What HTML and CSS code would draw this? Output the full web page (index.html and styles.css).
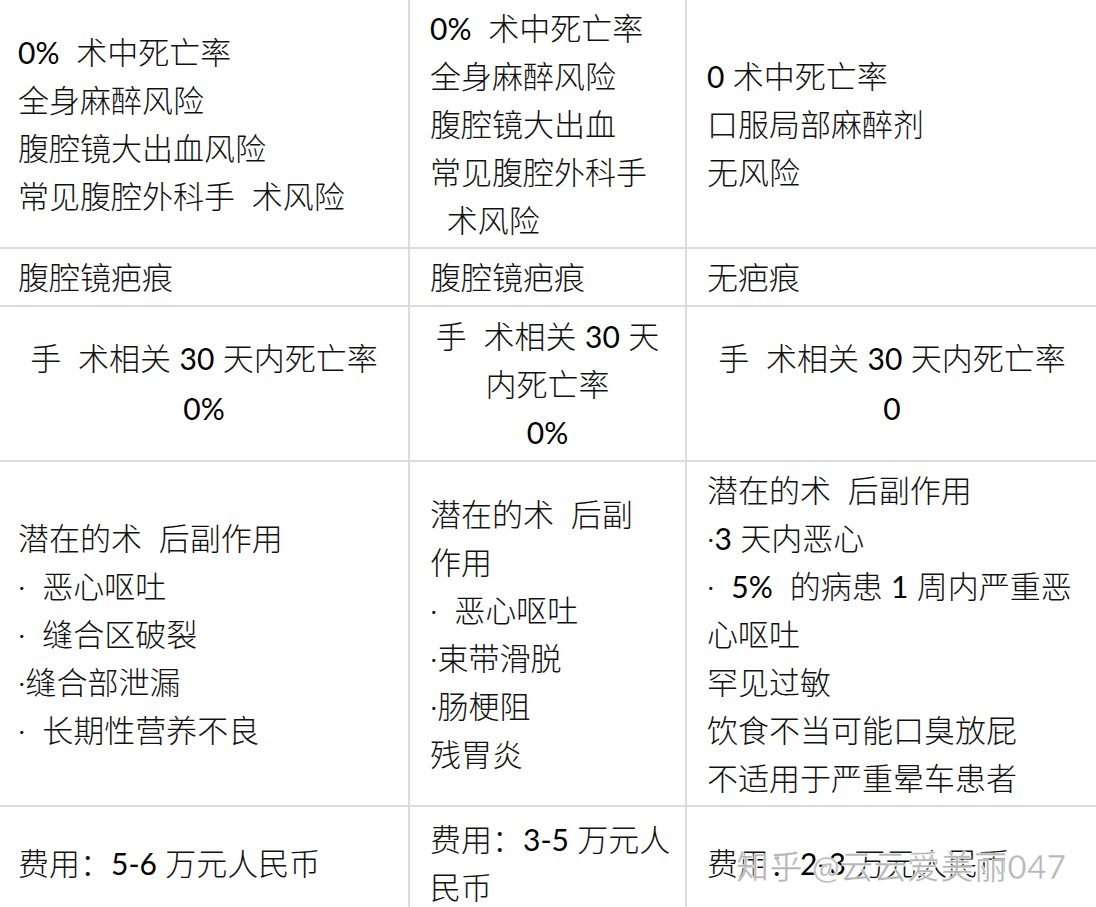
FILE: index.html
```html
<!DOCTYPE html>
<html lang="zh-CN">
<head>
<meta charset="utf-8">
<title>对比表</title>
<link rel="stylesheet" href="styles.css">
</head>
<body>
<div class="table">
  <div class="cell first">
    <div class="line"><span class="num">0%</span>&nbsp;&nbsp;术中死亡率</div>
    <div class="line">全身麻醉风险</div>
    <div class="line">腹腔镜大出血风险</div>
    <div class="line">常见腹腔外科手&nbsp;&nbsp;术风险</div>
  </div>
  <div class="cell">
    <div class="line"><span class="num">0%</span>&nbsp;&nbsp;术中死亡率</div>
    <div class="line">全身麻醉风险</div>
    <div class="line">腹腔镜大出血</div>
    <div class="line">常见腹腔外科手</div>
    <div class="line">&nbsp;&nbsp;术风险</div>
  </div>
  <div class="cell">
    <div class="line"><span class="num">0</span> 术中死亡率</div>
    <div class="line">口服局部麻醉剂</div>
    <div class="line">无风险</div>
  </div>

  <div class="cell first">
    <div class="line">腹腔镜疤痕</div>
  </div>
  <div class="cell">
    <div class="line">腹腔镜疤痕</div>
  </div>
  <div class="cell">
    <div class="line">无疤痕</div>
  </div>

  <div class="cell first center">
    <div class="line">手&nbsp;&nbsp;术相关 <span class="num">30</span> 天内死亡率</div>
    <div class="line tall"><span class="num">0%</span></div>
  </div>
  <div class="cell center">
    <div class="line">手&nbsp;&nbsp;术相关 <span class="num">30</span> 天</div>
    <div class="line">内死亡率</div>
    <div class="line"><span class="num">0%</span></div>
  </div>
  <div class="cell center">
    <div class="line">手&nbsp;&nbsp;术相关 <span class="num">30</span> 天内死亡率</div>
    <div class="line tall"><span class="num">0</span></div>
  </div>

  <div class="cell first">
    <div class="line">潜在的术&nbsp;&nbsp;后副作用</div>
    <div class="line">·&nbsp;&nbsp;恶心呕吐</div>
    <div class="line">·&nbsp;&nbsp;缝合区破裂</div>
    <div class="line">·缝合部泄漏</div>
    <div class="line">·&nbsp;&nbsp;长期性营养不良</div>
  </div>
  <div class="cell">
    <div class="line">潜在的术&nbsp;&nbsp;后副</div>
    <div class="line">作用</div>
    <div class="line">·&nbsp;&nbsp;恶心呕吐</div>
    <div class="line">·束带滑脱</div>
    <div class="line">·肠梗阻</div>
    <div class="line">残胃炎</div>
  </div>
  <div class="cell">
    <div class="line">潜在的术&nbsp;&nbsp;后副作用</div>
    <div class="line">·<span class="num">3</span> 天内恶心</div>
    <div class="line">·&nbsp;&nbsp;<span class="num">5%</span>&nbsp;&nbsp;的病患 <span class="num">1</span> 周内严重恶</div>
    <div class="line">心呕吐</div>
    <div class="line">罕见过敏</div>
    <div class="line">饮食不当可能口臭放屁</div>
    <div class="line">不适用于严重晕车患者</div>
  </div>

  <div class="cell first">
    <div class="line">费用：<span class="num">5-6</span> 万元人民币</div>
  </div>
  <div class="cell">
    <div class="line">费用：<span class="num">3-5</span> 万元人</div>
    <div class="line">民币</div>
  </div>
  <div class="cell last">
    <div class="line">费用：<span class="num">2-3</span> 万元人民币</div>
    <div class="watermark">知乎 @云云爱美丽047</div>
  </div>
</div>
</body>
</html>
```
FILE: styles.css
```css
html, body {
  margin: 0;
  padding: 0;
  background: #ffffff;
}
body {
  width: 1096px;
  height: 907px;
  overflow: hidden;
}
.table {
  display: grid;
  grid-template-columns: 408px 275px 410px;
  grid-template-rows: 247px 56px 153px 343px 112px;
  column-gap: 2px;
  row-gap: 2px;
  background: #dcdcdc;
  width: 1096px;
  font-family: Lato, "Noto Sans CJK SC", sans-serif;
  font-size: 31px;
  font-weight: 300;
  color: #111111;
}
.cell {
  background: #ffffff;
  display: flex;
  flex-direction: column;
  justify-content: center;
  padding: 0 10px 0 20px;
  white-space: nowrap;
}
.cell.first {
  padding-left: 18px;
}
.cell.center {
  align-items: center;
  padding: 0;
}
.line {
  line-height: 48px;
  height: 48px;
}
.line.tall {
  height: 52px;
  line-height: 52px;
}
.num {
  font-weight: 400;
  color: #000000;
  font-size: 30px;
}
.last {
  position: relative;
}
.watermark {
  position: absolute;
  left: 49px;
  top: 34px;
  font-size: 33px;
  font-weight: 400;
  color: rgba(150, 150, 150, 0.7);
  -webkit-text-stroke: 0.5px rgba(255, 255, 255, 0.8);
  text-shadow: 0 0 1px #ffffff, 1px 1px 0 rgba(255, 255, 255, 0.7);
  letter-spacing: 0.5px;
}
```
